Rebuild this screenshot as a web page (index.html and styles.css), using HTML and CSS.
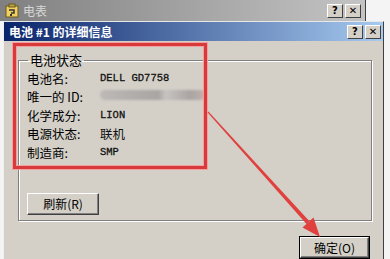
FILE: index.html
```html
<!doctype html>
<html lang="zh-CN">
  <head>
    <meta charset="utf-8" />
    <title>电池 #1 的详细信息</title>
    <link rel="stylesheet" href="styles.css">
  </head>
  <body>
    <div class="back-title">
      <div class="back-name">
        <svg class="app-icon" width="16" height="16" viewBox="0 0 16 16">
          <rect x="2" y="3" width="12" height="11" fill="#f0d060" stroke="#6a5a20"/>
          <rect x="5" y="1" width="6" height="3" fill="#c0a040" stroke="#6a5a20"/>
          <path d="M5 7 L10 7 L10 10 L7 10" fill="none" stroke="#333" stroke-width="1.5"/>
          <rect x="6" y="11" width="2" height="2" fill="#333"/>
        </svg>
        <span>电表</span>
      </div>
      <div class="caption-btns">
        <span class="cap-btn">?</span>
        <span class="cap-btn">✕</span>
      </div>
    </div>

    <div class="window">
      <div class="title">
        <span class="title-text">电池 #1 的详细信息</span>
        <div class="caption-btns">
          <span class="cap-btn">?</span>
          <span class="cap-btn">✕</span>
        </div>
      </div>
      <div class="body">
        <fieldset class="group">
          <legend>电池状态</legend>
          <div class="rows">
            <div class="row"><span class="label">电池名:</span><span class="value">DELL GD7758</span></div>
            <div class="row"><span class="label">唯一的 ID:</span><span class="value"><span class="blur"></span></span></div>
            <div class="row"><span class="label">化学成分:</span><span class="value">LION</span></div>
            <div class="row"><span class="label">电源状态:</span><span class="value cjk">联机</span></div>
            <div class="row"><span class="label">制造商:</span><span class="value">SMP</span></div>
          </div>
          <button class="btn refresh">刷新(R)</button>
        </fieldset>
        <div class="footer">
          <button class="btn ok">确定(O)</button>
        </div>
      </div>
    </div>

    <svg class="marks" width="390" height="259" viewBox="0 0 390 259">
      <rect x="14.5" y="44.5" width="191" height="123" fill="none" stroke="#f4a0a0" stroke-width="5"/>
      <rect x="14.5" y="44.5" width="191" height="123" fill="none" stroke="#d8393a" stroke-width="3"/>
      <polygon points="207.6,112.4 208.4,111.6 309.5,221.3 306.5,224.0" fill="#e0403e"/>
      <polygon points="320,237 313.5,217.5 302.5,227.5" fill="#e0403e"/>
    </svg>
  </body>
</html>
```

FILE: styles.css
```css
* {
	box-sizing: border-box;
}

body {
	margin: 0;
	background: #f4f4f4;
	width: 390px;
	height: 259px;
	overflow: hidden;
	position: relative;
	font-family: "Noto Sans CJK SC", "DejaVu Sans", sans-serif;
	font-size: 12px;
	color: #000;
}

.back-title {
	width: 366px;
	height: 21px;
	display: flex;
	align-items: center;
	justify-content: space-between;
	padding: 0 4px 0 4px;
	background: linear-gradient(to right, #808080, #c4c4c4);
	border-right: 1px solid #404040;
}

.back-name {
	display: flex;
	align-items: center;
	gap: 3px;
	color: #d8d8d8;
	font-size: 12px;
}

.caption-btns {
	display: flex;
	gap: 2px;
}

.cap-btn {
	width: 16px;
	height: 14px;
	background: #d4d0c8;
	border: 1px solid;
	border-color: #fff #404040 #404040 #fff;
	font-family: "DejaVu Sans", sans-serif;
	font-size: 10px;
	font-weight: bold;
	line-height: 12px;
	text-align: center;
}

.window {
	margin-left: 3px;
	width: 381px;
	height: 240px;
	background: #d4d0c8;
	border: 1px solid;
	border-color: #e8e8e8 #404040 #404040 #f0f0f0;
}

.title {
	height: 19px;
	display: flex;
	align-items: center;
	justify-content: space-between;
	padding: 0 2px 0 5px;
	background: linear-gradient(to right, #0a246a, #a6caf0);
}

.title-text {
	color: #fff;
	font-weight: bold;
	font-size: 12px;
}

.body {
	padding: 11px 11px 0 14px;
}

.group {
	margin: 0;
	padding: 0 0 7px 8px;
	border: 1px solid #808080;
	box-shadow: 1px 1px 0 #fff, inset 1px 1px 0 #fff;
	height: 169px;
}

.group legend {
	padding: 0 2px;
	margin-left: 1px;
	font-size: 13px;
	line-height: 16px;
}

.rows {
	padding-top: 1px;
}

.row {
	display: flex;
	height: 18.5px;
	align-items: center;
}

.label {
	width: 73px;
	font-size: 12.5px;
}

.value {
	font-family: "Liberation Mono", monospace;
	font-size: 10.5px;
	color: #111;
	-webkit-text-stroke: 0.3px #111;
}

.value.cjk {
	font-family: "Noto Sans CJK SC", sans-serif;
	font-size: 12.5px;
	-webkit-text-stroke: 0;
}

.blur {
	display: inline-block;
	width: 106px;
	height: 10px;
	border-radius: 5px;
	background: linear-gradient(to right, #bcb9b7, #a8a5a3 55%, #c6c3c1 62%, #a9a5a3 85%, #c6b2ae);
	filter: blur(1.2px);
}

.btn {
	background: #d4d0c8;
	border: 1px solid;
	border-color: #fff #404040 #404040 #fff;
	box-shadow: inset -1px -1px 0 #808080;
	font-family: "Noto Sans CJK SC", sans-serif;
	font-size: 12px;
	padding: 0;
	color: #000;
}

.refresh {
	width: 72px;
	height: 22px;
	margin-top: 31px;
}

.footer {
	display: flex;
	justify-content: flex-end;
	padding-top: 16px;
	padding-right: 3px;
}

.ok {
	width: 69px;
	height: 21px;
	outline: 1px solid #000;
}

.marks {
	position: absolute;
	top: 0;
	left: 0;
	pointer-events: none;
}
```
